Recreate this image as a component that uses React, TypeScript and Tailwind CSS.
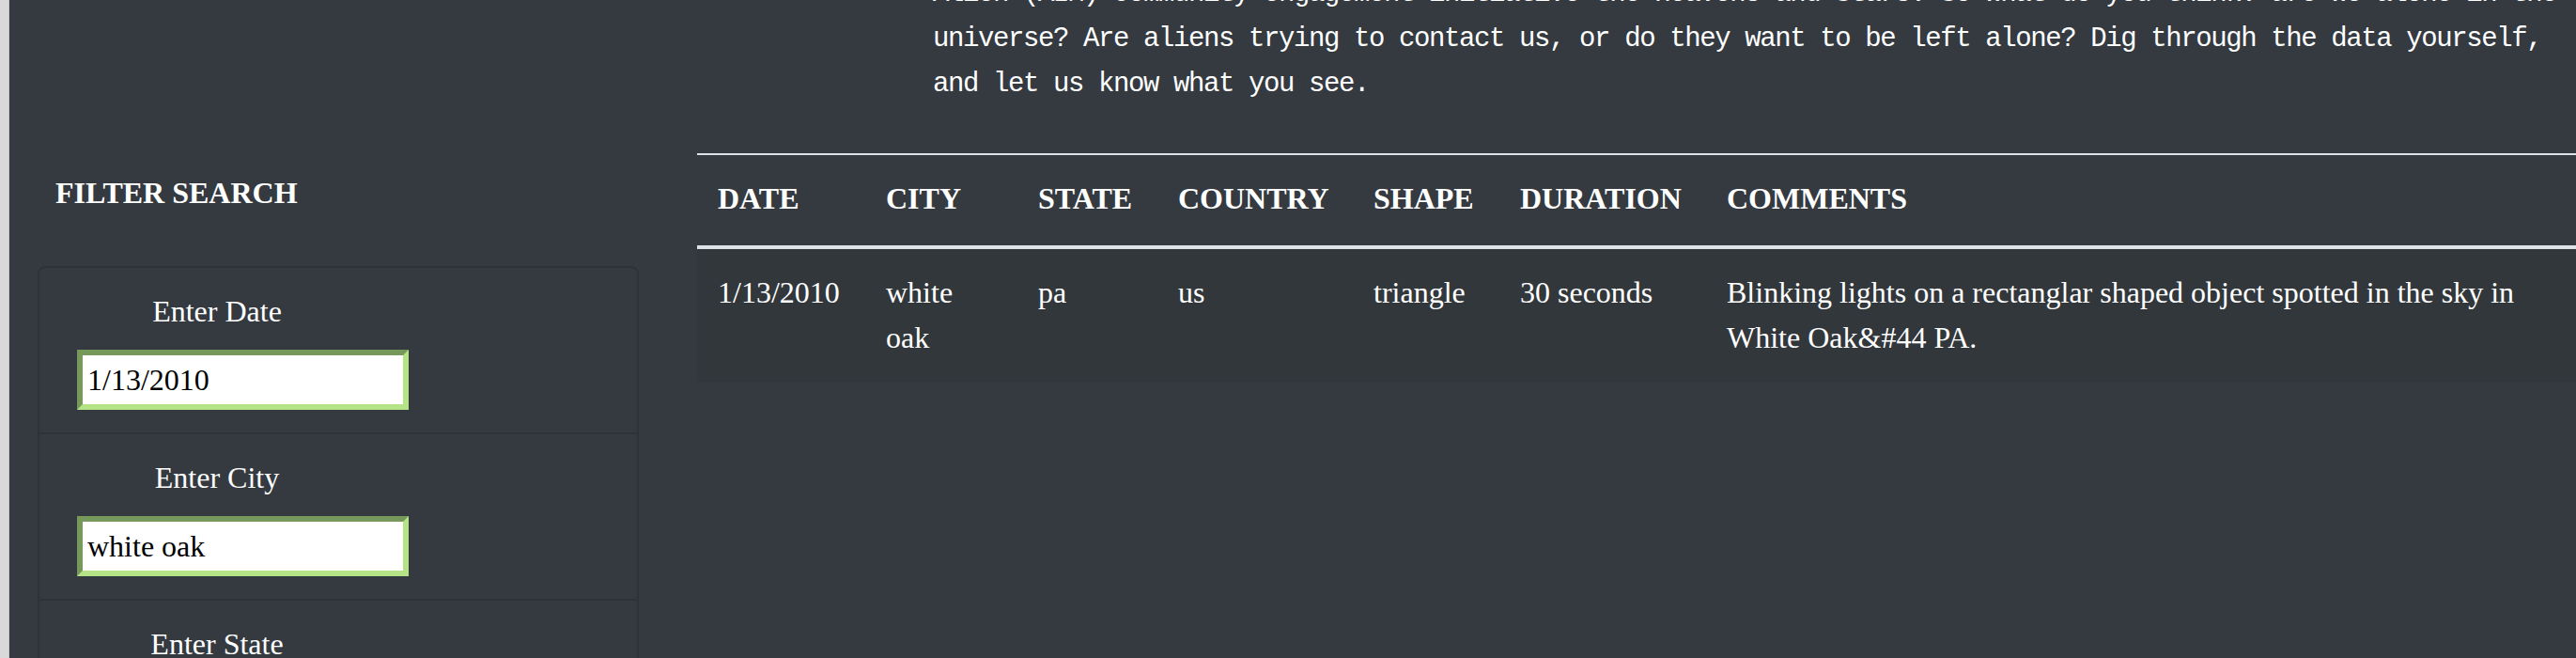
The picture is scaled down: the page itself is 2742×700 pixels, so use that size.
import React from 'react'

const serif = { fontFamily: '"Liberation Serif", "Times New Roman", serif' }

const filters = [
  { label: 'Enter Date', value: '1/13/2010' },
  { label: 'Enter City', value: 'white oak' },
  { label: 'Enter State', value: '' },
  { label: 'Enter Country', value: '' },
  { label: 'Enter Shape', value: '' },
]

const columns = [
  { name: 'DATE', w: 'w-[179px]' },
  { name: 'CITY', w: 'w-[162px]' },
  { name: 'STATE', w: 'w-[149px]' },
  { name: 'COUNTRY', w: 'w-[208px]' },
  { name: 'SHAPE', w: 'w-[156px]' },
  { name: 'DURATION', w: 'w-[220px]' },
  { name: 'COMMENTS', w: 'w-[926px]' },
]

const rows = [
  [
    '1/13/2010',
    'white oak',
    'pa',
    'us',
    'triangle',
    '30 seconds',
    'Blinking lights on a rectanglar shaped object spotted in the sky in White Oak&#44 PA.',
  ],
]

const intro = [
  'Alien (AIM) community engagement initiative the Heavens and Stars. So what do you think: are we alone in the',
  'universe? Are aliens trying to contact us, or do they want to be left alone? Dig through the data yourself,',
  'and let us know what you see.',
]

function FilterItem({ label, value }: { label: string; value: string }) {
  return (
    <li className="border-t-2 border-[#2e3337] first:border-t-0 pt-[22px] pb-[24px]">
      <div className="ml-[40px] w-[298px] text-center text-[32px] leading-[48px] text-white">{label}</div>
      <input
        defaultValue={value}
        className="mt-[17px] ml-[40px] block h-[64px] w-[353px] border-[6px] border-solid border-t-[#76985a] border-l-[#76985a] border-r-[#b5e486] border-b-[#b5e486] bg-white px-[5px] text-[32px] text-black outline-none"
        style={serif}
      />
    </li>
  )
}

export default function App() {
  return (
    <div className="flex min-h-screen bg-[#343a40] overflow-hidden" style={serif}>
      <div className="w-[10px] shrink-0 bg-[#d9d9d9] border-r border-[#c4c4c4]" />

      <div className="flex-1">
        <p
          className="mt-[-30px] ml-[983px] text-[29px] leading-[48px] tracking-[-1.4px] text-white whitespace-nowrap"
          style={{ fontFamily: '"Liberation Mono", "DejaVu Sans Mono", monospace' }}
        >
          {intro.map((line) => (
            <span key={line} className="block">
              {line}
            </span>
          ))}
        </p>

        <div className="mt-[49px] flex">
          {/* sidebar */}
          <aside className="w-[732px] shrink-0 pl-[30px]">
            <h5 className="ml-[19px] mt-[18px] text-[32px] leading-[48px] font-bold text-white">FILTER SEARCH</h5>
            <ul className="mt-[54px] w-[640px] rounded-lg border-2 border-[#2e3337]">
              {filters.map((f) => (
                <FilterItem key={f.label} {...f} />
              ))}
            </ul>
          </aside>

          {/* results */}
          <main className="flex-1">
            <table className="w-[2000px] table-fixed border-collapse text-white">
              <thead>
                <tr className="border-t-2 border-b-4 border-[#dee2e6]">
                  {columns.map((c) => (
                    <th
                      key={c.name}
                      className={`${c.w} px-[22px] pt-[22px] pb-[26px] text-left text-[32px] leading-[48px] font-bold`}
                    >
                      {c.name}
                    </th>
                  ))}
                </tr>
              </thead>
              <tbody>
                {rows.map((r, i) => (
                  <tr key={i} className="bg-[#32373c]">
                    {r.map((cell, j) => (
                      <td key={j} className="px-[22px] pt-[22px] pb-[24px] align-top text-[32px] leading-[48px]">
                        {cell}
                      </td>
                    ))}
                  </tr>
                ))}
              </tbody>
            </table>
          </main>
        </div>
      </div>
    </div>
  )
}
